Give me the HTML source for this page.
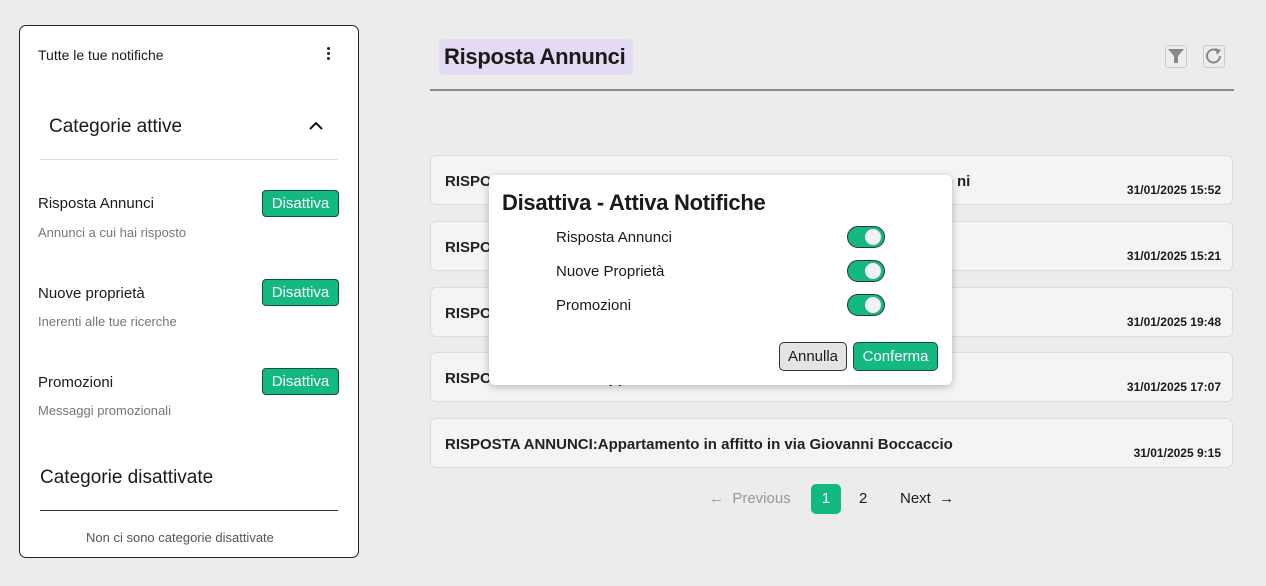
<!DOCTYPE html>
<html><head><meta charset="utf-8"><style>
*{box-sizing:border-box;margin:0;padding:0}
body{width:1266px;height:586px;background:#ececec;font-family:"Liberation Sans",sans-serif;color:#1a1a1a;position:relative;overflow:hidden}
.a{position:absolute}
.panel{left:19px;top:25px;width:340px;height:533px;background:#fff;border:1px solid #222;border-radius:7px}
.btn{background:#13b981;border:1px solid #1a4d3a;border-radius:4px;color:#fff;font-size:15px;width:77px;text-align:center;line-height:25px;height:27px}
.card{left:430px;width:803px;height:50px;background:#f4f4f4;border:1px solid #ddd;border-radius:6px}
.card .t{position:absolute;left:14px;top:17px;font-size:15px;font-weight:bold;color:#222}
.card .d{position:absolute;right:11px;top:27px;font-size:12px;font-weight:bold}
.tog{width:38px;height:22px;background:#13b981;border:1px solid #333;border-radius:11px;left:847px}
.tog:after{content:"";position:absolute;right:3px;top:2px;width:16px;height:16px;border-radius:50%;background:#f2f2f2}
</style></head><body>
<div class="a panel"></div>
<div class="a" style="left:38px;top:47px;font-size:14px">Tutte le tue notifiche</div>
<div class="a" style="left:327px;top:47px;width:4px">
<div style="width:3px;height:3px;background:#222;border-radius:50%;margin-bottom:2px"></div><div style="width:3px;height:3px;background:#222;border-radius:50%;margin-bottom:2px"></div><div style="width:3px;height:3px;background:#222;border-radius:50%"></div></div>
<div class="a" style="left:49px;top:116px;font-size:19px">Categorie attive</div>
<svg class="a" style="left:308px;top:120px" width="16" height="12"><path d="M2 9L8 3L14 9" stroke="#111" stroke-width="2" fill="none"/></svg>
<div class="a" style="left:40px;top:159px;width:298px;height:1px;background:#ddd"></div>
<div class="a" style="left:38px;top:195px;font-size:15px">Risposta Annunci</div>
<div class="a" style="left:38px;top:225px;font-size:13px;color:#777">Annunci a cui hai risposto</div>
<div class="a btn" style="left:262px;top:190px">Disattiva</div>
<div class="a" style="left:38px;top:285px;font-size:15px">Nuove proprietà</div>
<div class="a" style="left:38px;top:314px;font-size:13px;color:#777">Inerenti alle tue ricerche</div>
<div class="a btn" style="left:262px;top:279px">Disattiva</div>
<div class="a" style="left:38px;top:374px;font-size:15px">Promozioni</div>
<div class="a" style="left:38px;top:403px;font-size:13px;color:#777">Messaggi promozionali</div>
<div class="a btn" style="left:262px;top:368px">Disattiva</div>
<div class="a" style="left:40px;top:467px;font-size:19px">Categorie disattivate</div>
<div class="a" style="left:40px;top:510px;width:298px;height:1px;background:#333"></div>
<div class="a" style="left:86px;top:530px;font-size:13px;color:#555">Non ci sono categorie disattivate</div>

<div class="a" style="left:439px;top:39px;width:194px;height:36px;background:#e4daf3;border-radius:5px"></div>
<div class="a" style="left:444px;top:44px;font-size:22px;font-weight:bold;letter-spacing:-0.3px">Risposta Annunci</div>
<div class="a" style="left:430px;top:89px;width:804px;height:2px;background:#8a8a8a"></div>
<div class="a" style="left:1165px;top:45px;width:22px;height:23px;border:1px solid #ccc;border-radius:3px"></div>
<svg class="a" style="left:1166px;top:46px" width="20" height="20"><path d="M2 3H18L12 10V17L8 17V10Z" fill="#888"/></svg>
<div class="a" style="left:1203px;top:45px;width:22px;height:23px;border:1px solid #ccc;border-radius:3px"></div>
<svg class="a" style="left:1204px;top:46px" width="20" height="20"><path d="M16 10A6.5 6.5 0 1 1 13 4.5" stroke="#888" stroke-width="2" fill="none"/><path d="M11 2L17 4L13 9Z" fill="#888"/></svg>

<div class="a card" style="top:155px"><div class="t">RISPOSTA ANNUNCI:Appartamento in affitto in via Giovanni Boccaccio ni</div><div class="d">31/01/2025 15:52</div></div>
<div class="a card" style="top:221px"><div class="t">RISPOSTA ANNUNCI:Appartamento in affitto in via Francesca</div><div class="d">31/01/2025 15:21</div></div>
<div class="a card" style="top:287px"><div class="t">RISPOSTA ANNUNCI</div><div class="d">31/01/2025 19:48</div></div>
<div class="a card" style="top:352px"><div class="t">RISPOSTA ANNUNCI:Appartamento in affitto in via San Giacomo</div><div class="d">31/01/2025 17:07</div></div>
<div class="a card" style="top:418px"><div class="t">RISPOSTA ANNUNCI:Appartamento in affitto in via Giovanni Boccaccio</div><div class="d">31/01/2025 9:15</div></div>

<div class="a" style="left:489px;top:175px;width:463px;height:210px;background:#fff;border-radius:6px;box-shadow:0 2px 8px rgba(0,0,0,.25)"></div>
<div class="a" style="left:502px;top:190px;font-size:22px;font-weight:bold;letter-spacing:-0.3px">Disattiva - Attiva Notifiche</div>
<div class="a" style="left:556px;top:229px;font-size:15px">Risposta Annunci</div>
<div class="a" style="left:556px;top:263px;font-size:15px">Nuove Proprietà</div>
<div class="a" style="left:556px;top:297px;font-size:15px">Promozioni</div>
<div class="a tog" style="top:226px"></div>
<div class="a tog" style="top:260px"></div>
<div class="a tog" style="top:294px"></div>
<div class="a" style="left:779px;top:342px;width:68px;height:29px;background:#e4e4e4;border:1px solid #333;border-radius:5px;font-size:15px;text-align:center;line-height:27px">Annulla</div>
<div class="a" style="left:853px;top:342px;width:85px;height:29px;background:#13b981;border:1px solid #1a4d3a;border-radius:5px;font-size:15px;color:#fff;text-align:center;line-height:27px">Conferma</div>

<div class="a" style="left:709px;top:490px;font-size:15px;color:#999">← &nbsp;Previous</div>
<div class="a" style="left:811px;top:484px;width:30px;height:30px;background:#13b981;border-radius:5px;color:#fff;font-size:15px;text-align:center;line-height:30px">1</div>
<div class="a" style="left:859px;top:490px;font-size:15px">2</div>
<div class="a" style="left:900px;top:490px;font-size:15px">Next &nbsp;→</div>
</body></html>
